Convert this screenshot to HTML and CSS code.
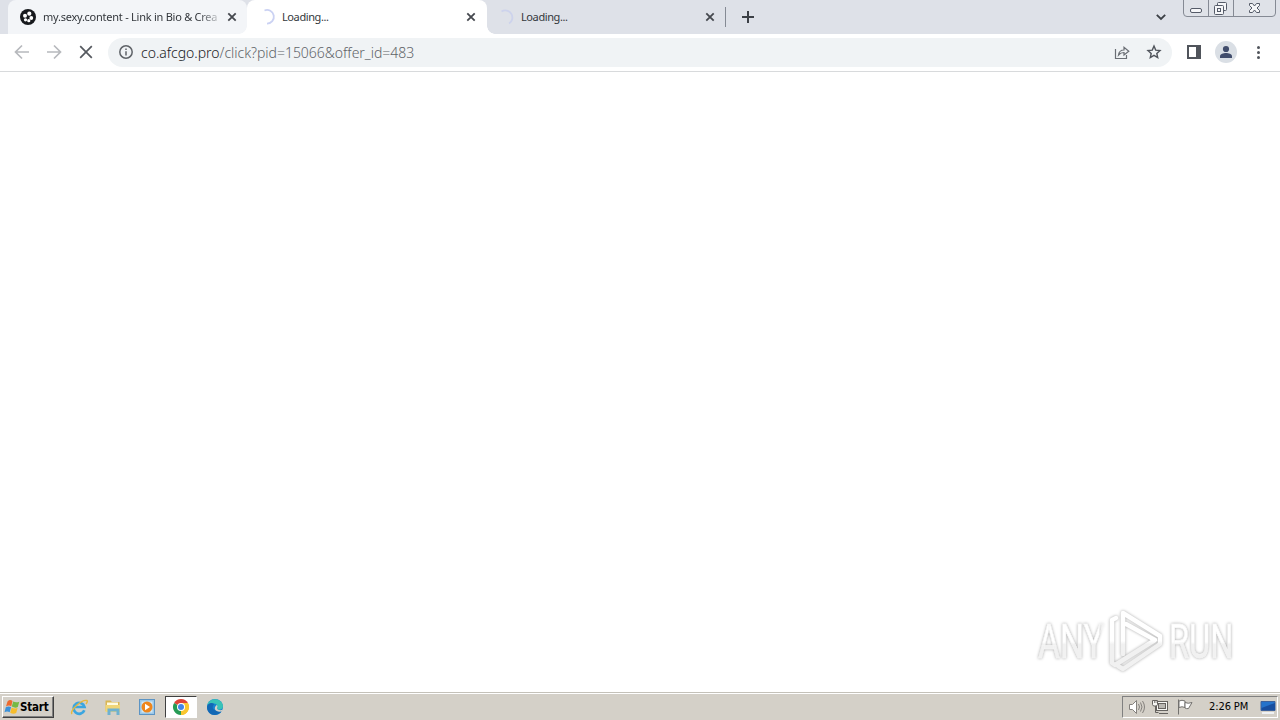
FILE: index.html
```html
<!DOCTYPE html>
<html lang="en">
<head>
<meta charset="utf-8">
<title>Loading...</title>
<link rel="stylesheet" href="styles.css">
</head>
<body>
<header class="tabstrip">
  <div class="tab tab-first">
    <svg class="favicon" viewBox="0 0 16 16"><circle cx="8" cy="8" r="8" fill="#17191d"/><g fill="#fff"><circle cx="9.300" cy="4.700" r="2.100"/><circle cx="5" cy="6.800" r="2"/><circle cx="11.300" cy="9" r="1.900"/><circle cx="5.500" cy="10.800" r="1.600"/><circle cx="8.800" cy="11.700" r="1.600"/></g></svg>
    <span class="tab-title tab-title-long">my.sexy.content - Link in Bio &amp; Crea</span>
    <svg class="close" viewBox="0 0 10 10"><path d="M1.300 1.300l7.400 7.400M8.700 1.300L1.300 8.700"/></svg>
  </div>
  <div class="tab tab-active">
    <svg class="favicon" viewBox="0 0 16 16"><path class="spinner" d="M5.500 1.500A6.800 6.800 0 1 1 8 14.600"/></svg>
    <span class="tab-title">Loading...</span>
    <svg class="close" viewBox="0 0 10 10"><path d="M1.300 1.300l7.400 7.400M8.700 1.300L1.300 8.700"/></svg>
  </div>
  <div class="tab tab-last">
    <svg class="favicon" viewBox="0 0 16 16"><path class="spinner spinner-dim" d="M3.500 2.500A7 7 0 1 1 11 14.600"/></svg>
    <span class="tab-title">Loading...</span>
    <svg class="close" viewBox="0 0 10 10"><path d="M1.300 1.300l7.400 7.400M8.700 1.300L1.300 8.700"/></svg>
  </div>
  <svg class="new-tab" viewBox="0 0 12 12"><path d="M6 0v12M0 6h12"/></svg>
  <svg class="tab-search" viewBox="0 0 10 6"><path d="M.8 .8L5 5L9.200 .8"/></svg>
  <svg class="window-buttons" viewBox="0 0 94 18"><path d="M.5 0v13q0 3.500 3.500 3.500h85q3.500 0 3.500-3.500V0" fill="#dfe2e8" stroke="#858a94"/><path d="M25.500 0v16M50.500 0v16" stroke="#858a94"/><g fill="#f5f6f8" stroke="#555b68"><rect x="7.500" y="8.500" width="11" height="4" rx="1.500"/><rect x="34.500" y="2.500" width="9" height="8" rx="1"/><rect x="31.500" y="5.500" width="9" height="9" rx="1"/><rect x="34.500" y="8.500" width="3" height="3"/><path d="M66.500 3.500h3l2 2.500 2-2.500h3v2l-2.500 2.500 2.500 2.500v2h-3l-2-2.500-2 2.500h-3v-2l2.500-2.500-2.500-2.500z"/></g></svg>
</header>
<nav class="toolbar">
  <div class="nav-buttons">
    <svg class="nav-icon nav-off" viewBox="0 0 16 16"><path d="M15 8H2M8 1.500L1.500 8L8 14.500"/></svg>
    <svg class="nav-icon nav-off" viewBox="0 0 16 16"><path d="M1 8h13M8 1.500L14.500 8L8 14.500"/></svg>
    <svg class="nav-icon" viewBox="0 0 16 16"><path d="M2.200 2.200l11.600 11.600M13.800 2.200L2.200 13.800"/></svg>
  </div>
  <div class="omnibox">
    <svg class="info" viewBox="0 0 14 14"><circle cx="7" cy="7" r="6.200"/><path d="M7 6.200v4.200M7 3.500v1.500"/></svg>
    <span class="url"><span class="host">co.afcgo.pro</span><span class="path">/click?pid=15066&amp;offer_id=483</span></span>
    <svg class="share" viewBox="0 0 16 16"><path d="M1.500 5v9.500h11V11M4.500 11c.5-3.500 2.500-5 5.500-5V3.200L14.800 7.300L10 11V8.500C7.500 8.500 6 9.200 4.500 11z"/></svg>
    <svg class="star" viewBox="0 0 16 16"><path d="M8 2l1.700 4.100 4.300.4-3.200 2.900.9 4.200L8 11.400l-3.700 2.200.9-4.200L2 6.500l4.300-.4z"/></svg>
  </div>
  <svg class="panel" viewBox="0 0 14 14"><path d="M0 0h14v14H0zM2 2v10h7V2z" fill="#50545b" fill-rule="evenodd"/></svg>
  <svg class="avatar" viewBox="0 0 22 22"><circle cx="11" cy="11" r="11" fill="#dadfe5"/><circle cx="11" cy="8" r="3.100" fill="#414d6c"/><path d="M5 17v-1.800c0-2.200 3.500-3.200 6-3.200s6 1 6 3.200V17z" fill="#414d6c"/></svg>
  <svg class="menu" viewBox="0 0 4 14"><g fill="#50545b"><circle cx="2.500" cy="2.500" r="1.500"/><circle cx="2.500" cy="7.500" r="1.500"/><circle cx="2.500" cy="12.500" r="1.500"/></g></svg>
</nav>
<main class="page">
  <div class="watermark">
    <span class="mark-word mark-any">ANY</span>
    <svg class="mark-logo" viewBox="0 0 58 62">
      <defs><linearGradient id="fade" gradientUnits="userSpaceOnUse" x1="0" y1="0" x2="0" y2="62"><stop offset=".48" stop-color="#fff"/><stop offset=".54" stop-color="#f1f1f1"/></linearGradient></defs>
      <path d="M8 7L4 9V52L7 54L47 29L18 13M15 43V2L52 25V33L15 58L10 55" stroke="url(#fade)"/>
    </svg>
    <span class="mark-word mark-run">RUN</span>
  </div>
</main>
<footer class="taskbar">
  <div class="start">
    <svg class="flag-logo" viewBox="0 0 16 16"><path d="M3.500 2.500q2.500-2.600 5-.5L7.300 7.200q-2.500-1.500-5.300.3z" fill="#ed6a2e"/><path d="M9.200 2.500q2.700 1.500 6.100.3l-1.500 5.300q-2.800 1.300-6-.6z" fill="#76b943"/><path d="M1.800 8.300q2.700-1.700 5.300-.2L5.700 13.300q-2.500-1.800-5.200 0z" fill="#3b91d9"/><path d="M7.700 8.500q2.900 1.800 5.900.6l-1.400 5q-2.900 1.300-6-.4z" fill="#f7bd2c"/></svg>
    <span>Start</span>
  </div>
  <div class="launchers">
    <div class="launcher"><svg viewBox="0 0 18 18"><path d="M14.300 12.200A5.500 5.500 0 1 1 14.500 9H5" fill="none" stroke="#3ba6e0" stroke-width="2.700"/><path d="M2 16C-1 13 12 1 17 2.500q1 1-1 3.500" fill="none" stroke="#e7b83c" stroke-width="1.400"/></svg></div>
    <div class="launcher"><svg viewBox="0 0 18 18"><path d="M1.500 2.500h5l1.500 1.500h7.500v9h-14z" fill="#d9b653"/><path d="M3 4.500h11v4H3z" fill="#fffbe0"/><path d="M1.500 7h14.500v7H1.500z" fill="#f0d577"/><path d="M3.500 17v-6.500h12V17h-3v-3.500h-6V17z" fill="#6fb1d0"/></svg></div>
    <div class="launcher"><svg viewBox="0 0 18 18"><rect x="1.500" y="1.500" width="15" height="15" fill="#9bc8e9" stroke="#5c94c4"/><rect x="3.500" y="3.500" width="11" height="11" fill="#d4e8f4"/><circle cx="9" cy="9" r="5.500" fill="#ee861d"/><path d="M7 5.700l5 3.300-5 3.300z" fill="#fff"/></svg></div>
    <div class="launcher launcher-active"><svg viewBox="0 0 18 18"><path d="M9 9L2.070 5A8 8 0 0 1 15.930 5z" fill="#df4437"/><path d="M9 9l6.930-4A8 8 0 0 1 9 17z" fill="#f9c62f"/><path d="M9 9v8A8 8 0 0 1 2.070 5z" fill="#279b55"/><path d="M9 5h6.930A8 8 0 0 1 9 17l3.500-6z" fill="#f9c62f"/><circle cx="9" cy="9" r="4" fill="#fff"/><circle cx="9" cy="9" r="3" fill="#4285e8"/></svg></div>
    <div class="launcher"><svg viewBox="0 0 18 18"><circle cx="9" cy="9" r="8" fill="#1683cf"/><path d="M1.200 8C2-1 16-1 17 8c0 4-5 4.500-6 2.500 1-2 0-5-3-5C5 5 2 6 1.200 8z" fill="#39c3b7"/><path d="M1 9c1-5 6-4.500 7-2.500-3 3-1 7 7.500 7C11 19 1 18 1 9z" fill="#1268b5"/><path d="M10.500 7c2 1 .5 2.500.5 3.500 1 2 4 2 6 1l-1 2c-7 1-9-3-5.500-6.500z" fill="#d4d0c8"/></svg></div>
  </div>
  <div class="tray">
    <svg class="tray-icon" viewBox="0 0 18 16"><g fill="#fff" stroke="#84817d"><path d="M1.500 5.500h3l4-4v13l-4-4h-3z"/><path d="M10.500 5q2 3 0 6M12.500 3.500q3 4.500 0 9M14.500 2q4 6 0 12" fill="none"/></g></svg>
    <svg class="tray-icon" viewBox="0 0 18 16"><g stroke="#65625f"><rect x="4.500" y="2.500" width="11" height="9" fill="#f7f7f5"/><rect x="6.500" y="4.500" width="7" height="5" fill="#bab8b3"/><path d="M7 14.500h9M3.500 7v6.500h3" fill="none"/><path d="M.5 1.500h5v4l-1 1.500h-3l-1-1.500z" fill="#f7f7f5"/><path d="M2.500 1v3M4 1v3" stroke-width=".7"/></g></svg>
    <svg class="tray-icon" viewBox="0 0 18 16"><g fill="#fff" stroke="#73716e"><path d="M2.500 .5v15M3 2q3-1.500 6 0v6.500q-3-1.500-6 0z"/><path d="M9 3.500q3 1.500 7 0l-3.500 6q-2 .5-3.500-.5z"/></g></svg>
    <span class="clock">2:26 PM</span>
    <svg class="desktop" viewBox="0 0 16 14"><path d="M1 1.500h14v9H1z" fill="#2573cb" stroke="#3e629b"/><path d="M1.500 8L15 3v7H1.500z" fill="#184e9f"/><path d="M2 13h12" stroke="#eef1f4" stroke-width="2"/></svg>
  </div>
</footer>
</body>
</html>
```
FILE: styles.css
```css
* { box-sizing: border-box; }
body { margin: 0; width: 1280px; height: 720px; display: flex; flex-direction: column; overflow: hidden; background: #fff; font-family: "DejaVu Sans Condensed", "DejaVu Sans", sans-serif; font-stretch: condensed; }
svg { display: block; flex: none; overflow: visible; }

.tabstrip { display: flex; align-items: center; height: 34px; padding-left: 8px; background: #dee1e8; flex: none; }
.tab { display: flex; align-items: center; height: 34px; width: 240px; padding-left: 12px; }
.tab-first { width: 239px; background: #f3f5f8; border-radius: 8px 8px 0 0; }
.tab-active { position: relative; background: #fff; border-radius: 8px 8px 0 0; }
.tab-active::before, .tab-active::after { content: ""; position: absolute; bottom: 0; width: 8px; height: 8px; }
.tab-active::before { left: -8px; background: radial-gradient(circle at 0 0, transparent 7.5px, #fff 8px); }
.tab-active::after { right: -8px; background: radial-gradient(circle at 100% 0, transparent 7.5px, #fff 8px); }
.tab-last { width: 239px; padding-left: 11px; background: linear-gradient(#858a94, #858a94) right center / 1px 20px no-repeat; }
.favicon { width: 16px; height: 16px; }
.spinner { fill: none; stroke: #cbd2f3; stroke-width: 1.8; }
.spinner-dim { stroke: #cdd3ec; }
.tab-title { width: 176px; margin-left: 7px; font-family: "Noto Sans", sans-serif; font-stretch: normal; font-size: 11px; line-height: 16px; letter-spacing: -0.4px; color: #33373c; white-space: nowrap; overflow: hidden; }
.tab-title-long { letter-spacing: -0.25px; -webkit-mask-image: linear-gradient(90deg, #000 155px, rgba(0, 0, 0, .2) 176px); mask-image: linear-gradient(90deg, #000 155px, rgba(0, 0, 0, .2) 176px); }
.close { width: 10px; height: 10px; margin-left: 8px; fill: none; stroke: #45484e; stroke-width: 1.8; }
.new-tab { width: 12px; height: 12px; margin-left: 16px; stroke: #3c4046; stroke-width: 2; }
.tab-search { width: 10px; height: 6px; margin-left: auto; fill: none; stroke: #3c4046; stroke-width: 1.8; }
.window-buttons { width: 94px; height: 18px; margin-left: 17px; margin-right: 3px; align-self: flex-start; fill: none; }

.toolbar { display: flex; align-items: center; height: 38px; padding: 0 20px 1px 14px; border-bottom: 1px solid #d8dadc; background: #fff; flex: none; }
.nav-buttons { display: flex; gap: 16px; width: 94px; }
.nav-icon { width: 16px; height: 16px; fill: none; stroke: #55595f; stroke-width: 1.7; }
.nav-off { stroke: #b7b9bd; }
.omnibox { display: flex; align-items: center; width: 1064px; height: 29px; padding: 0 10px 0 11px; border-radius: 15px; background: #f0f3f5; }
.info { width: 14px; height: 14px; fill: none; stroke: #5f6368; stroke-width: 1.5; }
.url { flex: 1; margin-left: 8px; padding-top: 2px; font-family: "Noto Sans", sans-serif; font-stretch: normal; font-weight: 300; font-size: 14px; line-height: 20px; letter-spacing: -0.02px; white-space: nowrap; }
.host { color: #202124; }
.path { color: #5f6368; }
.share { width: 16px; height: 16px; margin-right: 16px; fill: none; stroke: #6a6e74; stroke-width: 1.2; }
.star { width: 16px; height: 16px; fill: none; stroke: #50545b; stroke-width: 1.4; }
.panel { width: 14px; height: 14px; margin-left: 15px; }
.avatar { width: 22px; height: 22px; margin-left: 14px; }
.menu { width: 4px; height: 14px; margin-left: auto; }

.page { flex: 1; display: flex; align-items: flex-end; justify-content: flex-end; padding: 0 48px 19px 0; background: #fff; }
.watermark { display: flex; align-items: center; width: 196px; height: 62px; filter: drop-shadow(0 0 1.5px #aaa); }
.mark-word { font-family: Roboto, sans-serif; font-stretch: normal; font-size: 48px; line-height: 62px; color: transparent; background: linear-gradient(#fff 50%, #f1f1f1 54%); -webkit-background-clip: text; background-clip: text; transform-origin: left center; white-space: nowrap; -webkit-text-stroke: .5px #f6f6f6; }
.mark-any { width: 88px; margin: 0 -18px 0 2px; transform: scaleX(.7); }
.mark-run { width: 95px; margin-right: -31px; transform: scaleX(.68); }
.mark-logo { width: 58px; height: 62px; margin-right: 3px; fill: none; stroke-width: 4.5; stroke-linejoin: round; stroke-linecap: round; }

.taskbar { display: flex; align-items: center; height: 28px; padding: 1px 2px 1px; background: #d4d0c8; border-top: 1px solid #c4c1b9; box-shadow: inset 0 1px #fff; flex: none; }
.start { display: flex; align-items: center; width: 52px; height: 22px; padding-left: 1px; border: 1px solid; border-color: #fff #404040 #404040 #fff; box-shadow: inset -1px -1px #808080; font-size: 11.5px; font-weight: 700; letter-spacing: -.2px; color: #000; }
.flag-logo { width: 16px; height: 16px; }
.launchers { display: flex; align-items: center; gap: 2px; margin-left: 9px; }
.launcher { display: grid; place-items: center; width: 32px; height: 22px; }
.launcher svg { width: 18px; height: 18px; }
.launcher-active { background: #fff; border: 1px solid; border-color: #404040 #fff #fff #404040; }
.tray { display: flex; align-items: center; width: 156px; height: 22px; margin-left: auto; padding-left: 5px; border: 1px solid; border-color: #808080 #fff #fff #808080; }
.tray-icon { width: 18px; height: 16px; margin-right: 6px; }
.clock { width: 44px; margin-left: 9px; font-size: 11px; letter-spacing: -.1px; color: #000; white-space: nowrap; }
.desktop { width: 16px; height: 14px; margin-left: 7px; }
```
